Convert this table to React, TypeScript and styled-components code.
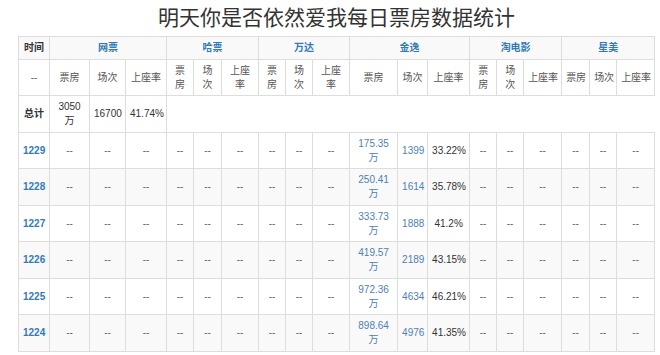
import React from "react";
import styled, { createGlobalStyle } from "styled-components";

const GlobalStyle = createGlobalStyle`
  html, body {
    margin: 0;
    padding: 0;
    background: #fff;
  }
  body {
    font-family: "Liberation Sans", "Noto Sans CJK SC", sans-serif;
    color: #333;
  }
`;

const COL_WIDTHS = [31, 40, 36, 41, 27, 28, 37, 27, 27, 37, 48, 30, 42, 27, 27, 38, 28, 27, 38];

const GROUPS = ["网票", "哈票", "万达", "金逸", "淘电影", "星美"];

// "\n" marks where the original wrapped the label in its narrow column
const SUB_HEADS = [
  ["票房", "场次", "上座率"],
  ["票\n房", "场\n次", "上座\n率"],
  ["票\n房", "场\n次", "上座\n率"],
  ["票房", "场次", "上座率"],
  ["票\n房", "场\n次", "上座率"],
  ["票房", "场次", "上座率"],
];

interface DayRow {
  date: string;
  box: string;
  shows: string;
  rate: string;
}

const DAYS: DayRow[] = [
  { date: "1229", box: "175.35\n万", shows: "1399", rate: "33.22%" },
  { date: "1228", box: "250.41\n万", shows: "1614", rate: "35.78%" },
  { date: "1227", box: "333.73\n万", shows: "1888", rate: "41.2%" },
  { date: "1226", box: "419.57\n万", shows: "2189", rate: "43.15%" },
  { date: "1225", box: "972.36\n万", shows: "4634", rate: "46.21%" },
  { date: "1224", box: "898.64\n万", shows: "4976", rate: "41.35%" },
];

const Page = styled.div`
  width: 660px;
  padding: 0 6px 0 18px;
  box-sizing: border-box;
`;

const Title = styled.h1`
  margin: 0;
  width: 637px;
  height: 36px;
  line-height: 36px;
  text-align: center;
  font-size: 21px;
  font-weight: normal;
  color: #333;
  font-family: "Liberation Sans", "Noto Sans CJK SC", sans-serif;
`;

const Table = styled.table`
  width: 637px;
  table-layout: fixed;
  border-collapse: collapse;
  border-spacing: 0;
  font-size: 10px;
  line-height: 13.75px;
`;

const Row = styled.tr<{ $striped?: boolean }>`
  background: ${(p) => (p.$striped ? "#f9f9f9" : "#fff")};
`;

type Tone = "plain" | "dash" | "sub" | "link" | "date" | "head" | "group";

const TONES: Record<Tone, { color: string; weight: string }> = {
  plain: { color: "#333", weight: "normal" },
  dash: { color: "#666", weight: "normal" },
  sub: { color: "#555", weight: "normal" },
  link: { color: "#4f80b6", weight: "normal" },
  date: { color: "#337ab7", weight: "bold" },
  head: { color: "#333", weight: "bold" },
  group: { color: "#337ab7", weight: "bold" },
};

const Cell = styled.td<{ $tone?: Tone }>`
  border: 1px solid #ddd;
  padding: 4px;
  text-align: center;
  vertical-align: middle;
  white-space: pre;
  overflow: hidden;
  color: ${(p) => TONES[p.$tone || "plain"].color};
  font-weight: ${(p) => TONES[p.$tone || "plain"].weight};
`;

const Dash = () => <Cell $tone="dash">--</Cell>;

export default function App() {
  return (
    <Page>
      <GlobalStyle />
      <Title>明天你是否依然爱我每日票房数据统计</Title>
      <Table>
        <colgroup>
          {COL_WIDTHS.map((w, i) => (
            <col key={i} style={{ width: w }} />
          ))}
        </colgroup>
        <tbody>
          <Row $striped>
            <Cell $tone="head">时间</Cell>
            {GROUPS.map((g) => (
              <Cell key={g} $tone="group" colSpan={3}>
                {g}
              </Cell>
            ))}
          </Row>
          <Row>
            <Cell $tone="dash">--</Cell>
            {SUB_HEADS.map((subs, gi) =>
              subs.map((s, si) => (
                <Cell key={`${gi}-${si}`} $tone="sub">
                  {s}
                </Cell>
              ))
            )}
          </Row>
          <Row>
            <Cell $tone="head">总计</Cell>
            <Cell>{"3050\n万"}</Cell>
            <Cell>16700</Cell>
            <Cell>41.74%</Cell>
          </Row>
          {DAYS.map((d, i) => (
            <Row key={d.date} $striped={i % 2 === 1}>
              <Cell $tone="date">{d.date}</Cell>
              {Array.from({ length: 9 }).map((_, k) => (
                <Dash key={`a${k}`} />
              ))}
              <Cell $tone="link">{d.box}</Cell>
              <Cell $tone="link">{d.shows}</Cell>
              <Cell>{d.rate}</Cell>
              {Array.from({ length: 6 }).map((_, k) => (
                <Dash key={`b${k}`} />
              ))}
            </Row>
          ))}
        </tbody>
      </Table>
    </Page>
  );
}
